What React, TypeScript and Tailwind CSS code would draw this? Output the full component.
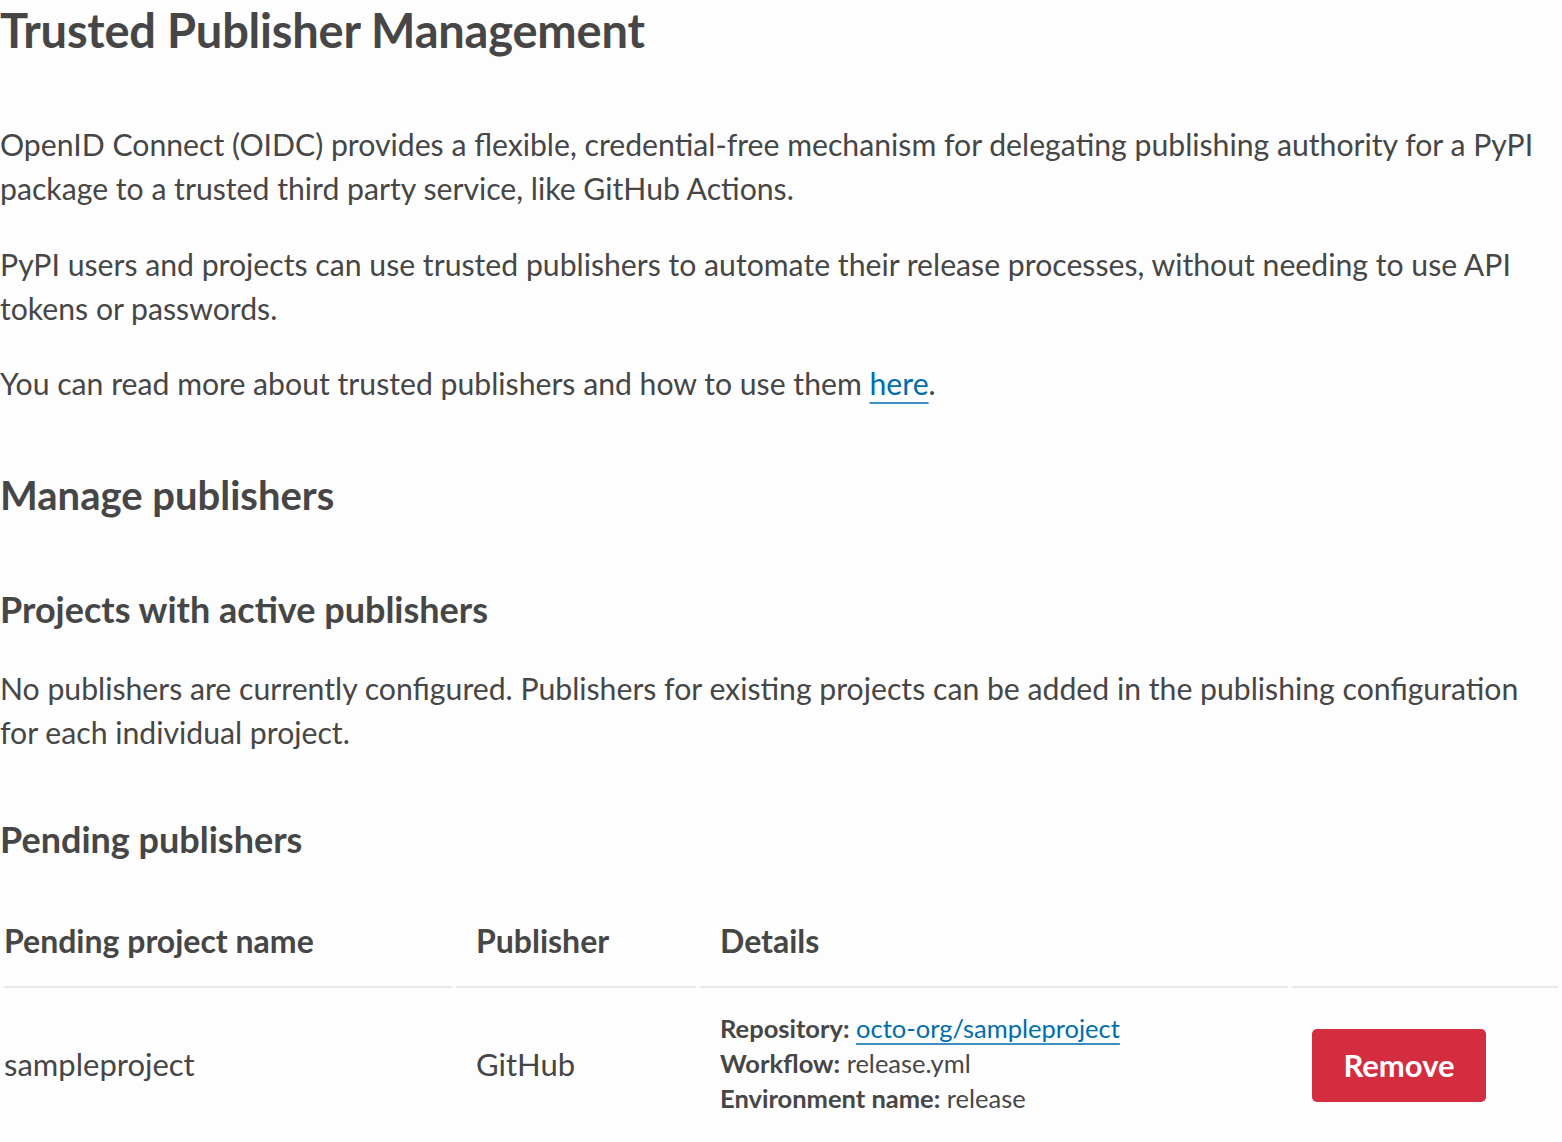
import React from "react";

export default function App() {
  return (
    <div className="min-h-[1142px] w-[1562px] bg-[#fdfdfd] text-[#464646] font-['Lato',sans-serif] overflow-hidden">
      <h1 className="text-[47px] leading-[60px] font-bold tracking-[-0.2px]">Trusted Publisher Management</h1>

      <p className="mt-[62px] max-w-[1545px] text-[30.2px] leading-[44px]">
        OpenID Connect (OIDC) provides a flexible, credential-free mechanism for delegating publishing authority for a PyPI package to a trusted third party service, like GitHub Actions.
      </p>
      <p className="mt-[32px] max-w-[1545px] text-[30.2px] leading-[44px]">
        PyPI users and projects can use trusted publishers to automate their release processes, without needing to use API tokens or passwords.
      </p>
      <p className="mt-[31px] max-w-[1545px] text-[30.2px] leading-[44px]">
        You can read more about trusted publishers and how to use them{" "}
        <a href="#" className="text-[#006dad] underline decoration-2 underline-offset-[7px] decoration-[#3d8ec2]">here</a>.
      </p>

      <h2 className="mt-[65px] text-[40px] leading-[50px] font-bold">Manage publishers</h2>
      <h3 className="mt-[67px] text-[36px] leading-[44px] font-bold">Projects with active publishers</h3>
      <p className="mt-[35px] max-w-[1545px] text-[30.2px] leading-[44px]">
        No publishers are currently configured. Publishers for existing projects can be added in the publishing configuration for each individual project.
      </p>
      <h3 className="mt-[63px] text-[36px] leading-[44px] font-bold">Pending publishers</h3>

      <div className="mt-[38px] px-1 grid grid-cols-[448px_240px_588px_266px] gap-x-1 gap-y-1">
        <div className="pt-[20px] pb-[23px] border-b-2 border-[#e8e8e8] text-[32px] leading-[44px] font-bold">Pending project name</div>
        <div className="pt-[20px] pb-[23px] pl-[20px] border-b-2 border-[#e8e8e8] text-[32px] leading-[44px] font-bold">Publisher</div>
        <div className="pt-[20px] pb-[23px] pl-[20px] border-b-2 border-[#e8e8e8] text-[32px] leading-[44px] font-bold">Details</div>
        <div className="pt-[20px] pb-[23px] pl-[20px] border-b-2 border-[#e8e8e8]"></div>

        <div className="flex items-center text-[31px] leading-[44px] py-[19px]">sampleproject</div>
        <div className="flex items-center pl-[20px] text-[31px] leading-[44px] py-[19px]">GitHub</div>
        <div className="flex flex-col justify-center pl-[20px] py-[19px] text-[25.5px] leading-[35px]">
          <div>
            <span className="font-bold">Repository:</span>{" "}
            <a href="#" className="text-[#006dad] underline decoration-2 underline-offset-[5px] decoration-[#3d8ec2]">octo-org/sampleproject</a>
          </div>
          <div>
            <span className="font-bold">Workflow:</span> release.yml
          </div>
          <div>
            <span className="font-bold">Environment name:</span> release
          </div>
        </div>
        <div className="flex items-center pl-[20px] py-[19px]">
          <button className="mt-1 w-[174px] h-[73px] rounded-[5px] bg-[#d52d40] text-white text-[31px] font-bold">Remove</button>
        </div>
      </div>
    </div>
  );
}
